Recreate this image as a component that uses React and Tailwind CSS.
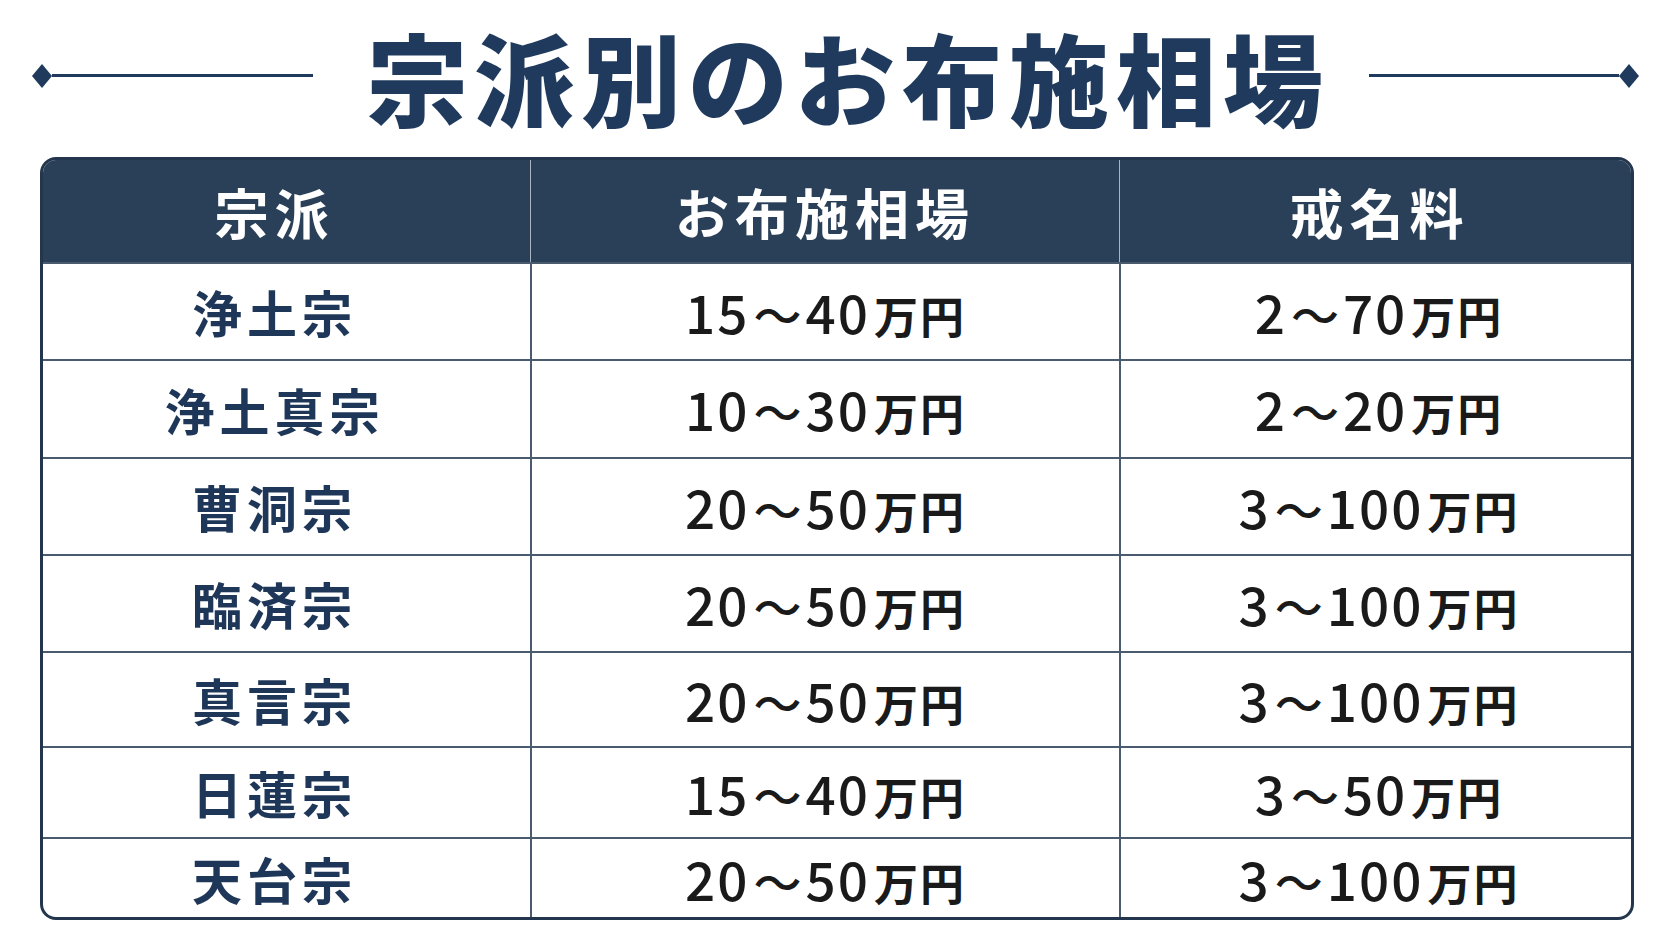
const rows = [
  { name: "浄土宗", fuse: ["15", "40"], kaimyo: ["2", "70"], h: "h-[97px]" },
  { name: "浄土真宗", fuse: ["10", "30"], kaimyo: ["2", "20"], h: "h-[98px]" },
  { name: "曹洞宗", fuse: ["20", "50"], kaimyo: ["3", "100"], h: "h-[97px]" },
  { name: "臨済宗", fuse: ["20", "50"], kaimyo: ["3", "100"], h: "h-[97px]" },
  { name: "真言宗", fuse: ["20", "50"], kaimyo: ["3", "100"], h: "h-[95px]" },
  { name: "日蓮宗", fuse: ["15", "40"], kaimyo: ["3", "50"], h: "h-[91px]" },
  { name: "天台宗", fuse: ["20", "50"], kaimyo: ["3", "100"], h: "h-[80px]" },
]

const jp = { fontFamily: '"Noto Sans CJK JP", "Noto Sans", sans-serif' }

function Diamond() {
  return (
    <svg width="20" height="24" viewBox="0 0 20 24" className="shrink-0">
      <polygon points="10,0 20,12 10,24 0,12" fill="#1f3a5c" />
    </svg>
  )
}

function Range({ from, to }) {
  return (
    <span className="flex items-baseline font-medium text-[#1a1a1a]">
      <span className="text-[53px] tracking-[2px]">{from}</span>
      <span className="text-[48px] mx-[4px]">～</span>
      <span className="text-[53px] tracking-[2px]">{to}</span>
      <span className="text-[44px] font-bold tracking-[2px] ml-[4px]">万円</span>
    </span>
  )
}

export default function App() {
  return (
    <div className="w-[1672px] h-[941px] bg-white overflow-hidden" style={jp}>
      <div className="flex items-center h-[152px] pl-[32px] pb-[1px]">
        <Diamond />
        <div className="w-[261px] h-[3px] bg-[#1f3a5c]" />
        <h1 className="ml-[54px] text-[100px] leading-none font-black tracking-[7px] text-[#1f3a5c]">
          宗派別のお布施相場
        </h1>
        <div className="ml-[39px] w-[250px] h-[3px] bg-[#1f3a5c]" />
        <Diamond />
      </div>

      <div className="ml-[40px] mt-[5px] w-[1594px] border-[3px] border-[#24364d] rounded-[16px] overflow-hidden">
        <div className="grid grid-cols-[487px_589px_1fr] h-[102px] bg-[#2a3f58] text-white font-bold text-[54px] tracking-[6px]">
          <div className="flex items-center justify-center pr-[24px]">宗派</div>
          <div className="flex items-center justify-center border-l border-[#aab4c0]">お布施相場</div>
          <div className="flex items-center justify-center border-l border-[#aab4c0] pl-[8px]">戒名料</div>
        </div>
        {rows.map((r) => (
          <div
            key={r.name}
            className={`grid grid-cols-[487px_589px_1fr] border-t-2 border-[#4b5b6f] ${r.h}`}
          >
            <div className="flex items-center justify-center pr-[24px] text-[50px] font-bold tracking-[5px] text-[#1e3658]">
              {r.name}
            </div>
            <div className="flex items-center justify-center border-l-2 border-[#4b5b6f]">
              <Range from={r.fuse[0]} to={r.fuse[1]} />
            </div>
            <div className="flex items-center justify-center border-l-2 border-[#4b5b6f] pl-[6px]">
              <Range from={r.kaimyo[0]} to={r.kaimyo[1]} />
            </div>
          </div>
        ))}
      </div>
    </div>
  )
}
